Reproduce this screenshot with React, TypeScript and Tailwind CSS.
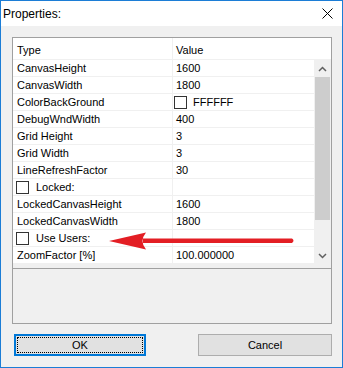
import React from 'react';

type Row = { type: string; value?: string; check?: boolean; colour?: boolean };

const rows: Row[] = [
  { type: 'CanvasHeight', value: '1600' },
  { type: 'CanvasWidth', value: '1800' },
  { type: 'ColorBackGround', value: 'FFFFFF', colour: true },
  { type: 'DebugWndWidth', value: '400' },
  { type: 'Grid Height', value: '3' },
  { type: 'Grid Width', value: '3' },
  { type: 'LineRefreshFactor', value: '30' },
  { type: 'Locked:', check: true },
  { type: 'LockedCanvasHeight', value: '1600' },
  { type: 'LockedCanvasWidth', value: '1800' },
  { type: 'Use Users:', check: true },
  { type: 'ZoomFactor [%]', value: '100.000000' },
];

function CheckBox() {
  return <div className="w-[13px] h-[13px] border border-[#333333] bg-white shrink-0" />;
}

export default function App() {
  return (
    <div
      className="relative w-[343px] h-[368px] flex flex-col border border-[#1c7dd6] bg-[#f0f0f0] text-black overflow-hidden"
      style={{ fontFamily: '"Liberation Sans", Arial, sans-serif' }}
    >
      {/* Title bar */}
      <div className="h-[25px] bg-white flex items-center justify-between pl-[2px] pr-[9px] shrink-0">
        <span className="text-[12px] leading-none">Properties:</span>
        <svg width="11" height="11" viewBox="0 0 11 11" stroke="#000" strokeWidth="1">
          <path d="M0.5 0.5 L10.5 10.5 M10.5 0.5 L0.5 10.5" />
        </svg>
      </div>

      {/* Content */}
      <div className="flex-1 flex flex-col pt-[11px] pl-[11px] pr-[10px]">
        <div className="h-[287px] border border-[#a0a0a0] flex flex-col">
          {/* Header */}
          <div className="h-[22px] bg-white flex border-b border-[#f0f0f0] text-[11px] leading-none">
            <div className="w-[160px] border-r border-[#f0f0f0] pl-[4px] pt-[7px]">Type</div>
            <div className="flex-1 pl-[3px] pt-[7px]">Value</div>
          </div>

          {/* Rows + scrollbar */}
          <div className="flex bg-white">
            <div className="flex-1 flex flex-col">
              {rows.map((r) => (
                <div key={r.type} className="h-[17px] flex border-b border-[#f0f0f0] text-[11px] leading-none">
                  <div className="w-[160px] border-r border-[#f0f0f0] flex items-center">
                    {r.check ? (
                      <div className="flex items-center pl-[3px] gap-[7px]">
                        <CheckBox />
                        <span>{r.type}</span>
                      </div>
                    ) : (
                      <span className="pl-[4px]">{r.type}</span>
                    )}
                  </div>
                  <div className="flex-1 flex items-center">
                    {r.colour ? (
                      <div className="flex items-center pl-[1px] gap-[6px]">
                        <CheckBox />
                        <span>{r.value}</span>
                      </div>
                    ) : (
                      <span className="pl-[3px]">{r.value}</span>
                    )}
                  </div>
                </div>
              ))}
            </div>
            {/* Scrollbar */}
            <div className="w-[17px] bg-[#f0f0f0] flex flex-col">
              <div className="h-[17px] flex items-center justify-center">
                <svg width="9" height="6" viewBox="0 0 9 6" fill="none" stroke="#606060" strokeWidth="1.5">
                  <path d="M1 5 L4.5 1.5 L8 5" />
                </svg>
              </div>
              <div className="h-[143px] mx-[1px] bg-[#cdcdcd]" />
              <div className="flex-1" />
              <div className="h-[17px] flex items-center justify-center">
                <svg width="9" height="6" viewBox="0 0 9 6" fill="none" stroke="#606060" strokeWidth="1.5">
                  <path d="M1 1 L4.5 4.5 L8 1" />
                </svg>
              </div>
            </div>
          </div>

          {/* Help pane */}
          <div className="h-[4px]" />
          <div className="flex-1 border-t border-[#a0a0a0]" />
        </div>

        {/* Buttons */}
        <div className="flex justify-between mt-[10px] pl-[2px] text-[11px]">
          <button className="w-[132px] h-[22px] border-2 border-[#0078d7] bg-[#e1e1e1] p-[1px]">
            <div className="h-full border border-dotted border-black flex items-center justify-center leading-none">
              OK
            </div>
          </button>
          <button className="w-[134px] h-[22px] border border-[#adadad] bg-[#e1e1e1] flex items-center justify-center leading-none">
            Cancel
          </button>
        </div>
      </div>

      {/* Red annotation arrow */}
      <svg className="absolute left-[106px] top-[230px]" width="190" height="20" viewBox="0 0 190 20">
        <path d="M36 7.5 L185 7.5 Q188 9.5 185 12 L36 12 Z" fill="#e31e24" />
        <path d="M2 10 L39 1.5 Q32 10 39 18.5 Z" fill="#e31e24" />
      </svg>
    </div>
  );
}
